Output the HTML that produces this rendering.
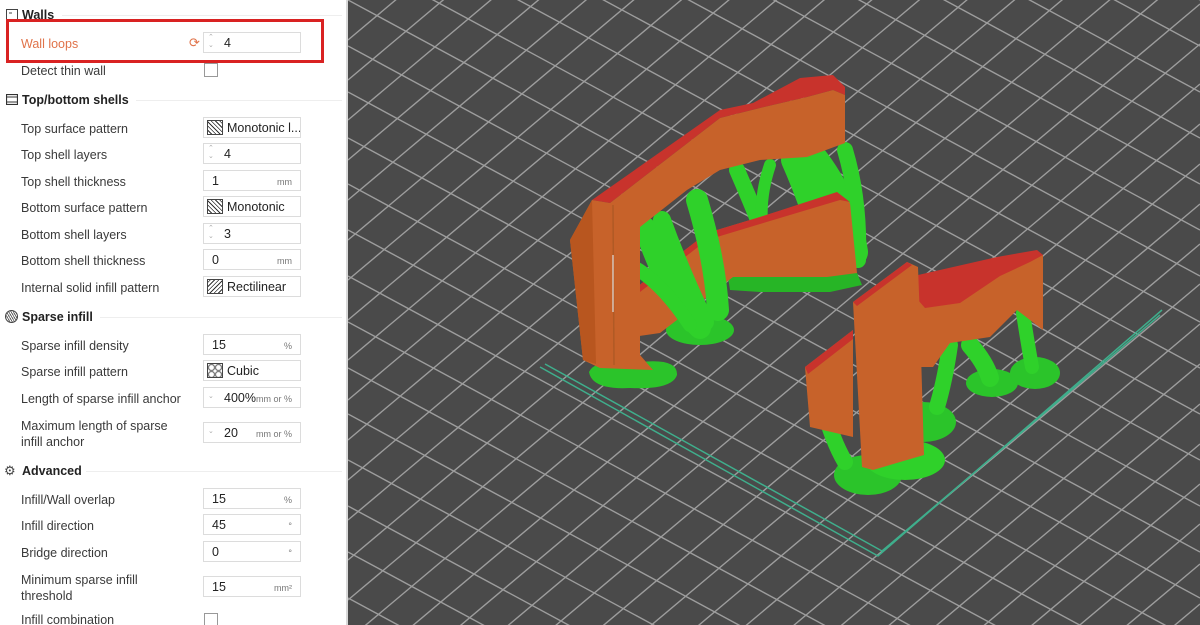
<!DOCTYPE html>
<html><head><meta charset="utf-8"><style>
body{margin:0;width:1200px;height:625px;overflow:hidden;position:relative;font-family:"Liberation Sans",sans-serif;background:#fff}
#panel{position:absolute;left:0;top:0;width:346px;height:625px;background:#fff;border-right:2px solid #d8d8d8;overflow:hidden}
.l{position:absolute;left:21px;font-size:12.5px;color:#3a3a3a;line-height:16px}
.h{position:absolute;left:22px;font-size:12.5px;font-weight:bold;color:#222}
.hl{position:absolute;height:1px;background:#eee;right:4px}
.in{position:absolute;left:203px;width:98px;height:21px;border:1px solid #dcdcdc;background:#fff;font-size:12.5px;color:#222;box-sizing:border-box;overflow:hidden}
.in .v{position:absolute;left:8px;top:3px;white-space:nowrap}
.in .u{position:absolute;right:8px;top:6px;font-size:9px;color:#777}
.sp{position:absolute;left:4px;top:1px;font-size:7px;color:#aaa;line-height:8px}
.pat{position:absolute;left:3px;top:2px;width:16px;height:15px;border:1px solid #444;box-sizing:border-box}
.cb{position:absolute;left:204px;width:12px;height:12px;border:1px solid #999}
</style></head><body>
<svg style="position:absolute;left:348px;top:0" width="852" height="625">
<rect width="852" height="625" fill="#4a4a4a"/>
<g stroke="#9d9d9d" stroke-width="1.4" fill="none">
<path d="M0,-460L852,0M0,-414L852,46M0,-368L852,92M0,-322L852,138M0,-276L852,184M0,-230L852,230M0,-184L852,276M0,-138L852,322M0,-92L852,368M0,-46L852,414M0,0L852,460M0,46L852,506M0,92L852,552M0,138L852,598M0,184L852,644M0,230L852,690M0,276L852,736M0,322L852,782M0,368L852,828M0,414L852,874M0,460L852,920M0,506L852,966M0,552L852,1012M0,598L852,1058"/>
<path d="M0,0L852,-716M0,40L852,-676M0,80L852,-636M0,120L852,-596M0,160L852,-556M0,200L852,-516M0,240L852,-476M0,280L852,-436M0,320L852,-396M0,360L852,-356M0,400L852,-316M0,440L852,-276M0,480L852,-236M0,520L852,-196M0,560L852,-156M0,600L852,-116M0,640L852,-76M0,680L852,-36M0,720L852,4M0,760L852,44M0,800L852,84M0,840L852,124M0,880L852,164M0,920L852,204M0,960L852,244M0,1000L852,284M0,1040L852,324M0,1080L852,364M0,1120L852,404M0,1160L852,444M0,1200L852,484M0,1240L852,524M0,1280L852,564M0,1320L852,604"/>
</g>
<g transform="translate(-348,0)">
<g fill="none" stroke="#3fae8c" stroke-width="1.5">
<polyline points="540,367 878,556 1162,310"/>
<polyline points="545,364 882,551 1160,315"/>
</g>
<path d="M589,372 Q595,358 640,362 Q678,358 677,375 Q672,390 630,388 Q592,390 589,372 Z" fill="#2bc42a"/>
<ellipse cx="700" cy="330" rx="34" ry="15" fill="#2bc42a"/>
<path d="M728,277 L800,275 L855,268 L862,285 L830,292 L760,292 L730,290 Z" fill="#27b526"/>
<g stroke="#2fd12a" stroke-linecap="round" fill="none">
<path d="M737,170 Q750,200 760,225" stroke-width="16"/>
<path d="M770,165 Q760,195 762,222" stroke-width="12"/>
<path d="M793,160 Q815,210 827,258" stroke-width="24"/>
<path d="M812,158 Q845,200 853,252" stroke-width="30"/>
<path d="M845,150 Q860,200 858,260" stroke-width="16"/>
</g>
<path d="M620,300 L707,233 L760,217 L837,193 L850,203 L857,273 L827,277 L733,277 L660,333 L626,338 Z" fill="#c7622a"/>
<path d="M620,300 L707,233 L760,217 L837,192 L850,202 L840,200 L760,224 L707,240 L622,306 Z" fill="#c8332c"/>
<g stroke="#2fd12a" stroke-linecap="round" fill="none">
<path d="M645,228 Q670,300 700,328" stroke-width="22"/>
<path d="M662,220 Q680,270 705,322" stroke-width="18"/>
<path d="M697,200 Q715,260 718,310" stroke-width="22"/>
<path d="M630,265 Q660,280 690,325" stroke-width="14"/>
</g>
<path d="M592,200 L720,110 L753,103 L800,78 L833,75 L845,87 L845,95 L833,90 L807,97 L760,108 L720,118 L610,203 Z" fill="#c8332c"/>
<path d="M610,203 L720,118 L760,108 L807,97 L833,90 L845,95 L845,143 L807,157 L760,160 L720,170 L687,190 L640,227 L640,355 L653,370 L600,368 L583,360 L570,240 L592,200 Z" fill="#c7622a"/>
<path d="M570,240 L592,200 L596,364 L583,360 Z" fill="#b8561f"/>
<path d="M613,205 L614,365" stroke="#b05a25" stroke-width="1.5"/>
<path d="M613,255 L613,312" stroke="#ddd" stroke-width="1.2"/>
<ellipse cx="868" cy="475" rx="34" ry="20" fill="#2bc42a"/>
<ellipse cx="923" cy="422" rx="33" ry="20" fill="#2bc42a"/>
<ellipse cx="905" cy="460" rx="40" ry="20" fill="#2fd12a"/>
<ellipse cx="992" cy="383" rx="26" ry="14" fill="#2bc42a"/>
<ellipse cx="1035" cy="373" rx="25" ry="16" fill="#2bc42a"/>
<g stroke="#2fd12a" stroke-linecap="round" fill="none">
<path d="M1023,313 Q1028,345 1032,367" stroke-width="14"/>
<path d="M970,345 Q985,362 990,378" stroke-width="18"/>
<path d="M950,345 Q945,380 937,407" stroke-width="16"/>
<path d="M823,405 Q832,440 845,462" stroke-width="16"/>
</g>
<path d="M918,280 L997,259 L1037,252 L1043,255 L1043,330 L1017,310 L990,337 L950,343 L933,367 L918,367 Z" fill="#c7622a"/>
<path d="M918,275 L997,257 L1037,250 L1043,255 L1030,262 L1000,276 L960,303 L925,308 L918,300 Z" fill="#c8332c"/>
<path d="M805,367 L853,330 L853,437 L810,427 Z" fill="#c7622a"/>
<path d="M805,367 L853,330 L853,339 L808,374 Z" fill="#c8332c"/>
<path d="M853,302 L907,262 L918,267 L920,320 L924,455 L873,470 L862,467 Z" fill="#c7622a"/>
<path d="M853,302 L907,262 L912,265 L857,306 Z" fill="#c8332c"/>
</g>
</svg>
<div id="panel">
<svg style="position:absolute;left:6px;top:9px" width="12" height="11"><rect x="0.5" y="0.5" width="11" height="10" fill="none" stroke="#444"/><line x1="3" y1="4" x2="6" y2="4" stroke="#444"/></svg>
<div class="h" style="top:8px">Walls</div><div class="hl" style="left:62px;top:15px"></div>
<div class="l" style="top:36px;color:#e0734a">Wall loops</div>
<div style="position:absolute;left:189px;top:35px;font-size:13px;color:#e0734a">⟳</div>
<div class="in" style="top:32px"><div class="sp">⌃<br>⌄</div><div class="v" style="left:20px">4</div></div>
<div style="position:absolute;left:6px;top:19px;width:312px;height:38px;border:3px solid #d92222"></div>
<div class="l" style="top:63px">Detect thin wall</div><div class="cb" style="top:63px"></div>
<svg style="position:absolute;left:6px;top:94px" width="12" height="11"><rect x="0.5" y="0.5" width="11" height="10" fill="none" stroke="#333" stroke-width="1.2"/><line x1="0" y1="3" x2="12" y2="3" stroke="#333"/><line x1="0" y1="8" x2="12" y2="8" stroke="#333"/></svg>
<div class="h" style="top:93px">Top/bottom shells</div><div class="hl" style="left:136px;top:100px"></div>
<div class="l" style="top:121px">Top surface pattern</div><div class="in" style="top:117px"><div class="pat" style="background:repeating-linear-gradient(45deg,#fff 0 2px,#333 2px 3px)"></div><div class="v" style="left:23px">Monotonic l...</div></div>
<div class="l" style="top:147px">Top shell layers</div><div class="in" style="top:143px"><div class="sp">⌃<br>⌄</div><div class="v" style="left:20px">4</div></div>
<div class="l" style="top:174px">Top shell thickness</div><div class="in" style="top:170px"><div class="v">1</div><div class="u">mm</div></div>
<div class="l" style="top:200px">Bottom surface pattern</div><div class="in" style="top:196px"><div class="pat" style="background:repeating-linear-gradient(45deg,#fff 0 2px,#333 2px 3px)"></div><div class="v" style="left:23px">Monotonic</div></div>
<div class="l" style="top:227px">Bottom shell layers</div><div class="in" style="top:223px"><div class="sp">⌃<br>⌄</div><div class="v" style="left:20px">3</div></div>
<div class="l" style="top:253px">Bottom shell thickness</div><div class="in" style="top:249px"><div class="v">0</div><div class="u">mm</div></div>
<div class="l" style="top:280px">Internal solid infill pattern</div><div class="in" style="top:276px"><div class="pat" style="background:repeating-linear-gradient(-45deg,#fff 0 2px,#333 2px 3px)"></div><div class="v" style="left:23px">Rectilinear</div></div>
<div style="position:absolute;left:5px;top:310px;width:11px;height:11px;border-radius:50%;border:1px solid #444;background:repeating-linear-gradient(60deg,#fff 0 1px,#666 1px 2px)"></div>
<div class="h" style="top:310px">Sparse infill</div><div class="hl" style="left:100px;top:317px"></div>
<div class="l" style="top:338px">Sparse infill density</div><div class="in" style="top:334px"><div class="v">15</div><div class="u">%</div></div>
<div class="l" style="top:364px">Sparse infill pattern</div><div class="in" style="top:360px"><div class="pat" style="background:radial-gradient(circle,#fff 2px,#555 3px,#fff 4px);background-size:7px 7px"></div><div class="v" style="left:23px">Cubic</div></div>
<div class="l" style="top:391px">Length of sparse infill anchor</div><div class="in" style="top:387px"><div class="sp" style="top:5px">⌄</div><div class="v" style="left:20px">400%<span style="font-size:9px;color:#777">mm or %</span></div></div>
<div class="l" style="top:418px">Maximum length of sparse<br>infill anchor</div><div class="in" style="top:422px"><div class="sp" style="top:5px">⌄</div><div class="v" style="left:20px">20</div><div class="u">mm or %</div></div>
<div style="position:absolute;left:4px;top:463px;font-size:13px;color:#444">⚙</div>
<div class="h" style="top:464px">Advanced</div><div class="hl" style="left:86px;top:471px"></div>
<div class="l" style="top:492px">Infill/Wall overlap</div><div class="in" style="top:488px"><div class="v">15</div><div class="u">%</div></div>
<div class="l" style="top:518px">Infill direction</div><div class="in" style="top:514px"><div class="v">45</div><div class="u">°</div></div>
<div class="l" style="top:545px">Bridge direction</div><div class="in" style="top:541px"><div class="v">0</div><div class="u">°</div></div>
<div class="l" style="top:572px">Minimum sparse infill<br>threshold</div><div class="in" style="top:576px"><div class="v">15</div><div class="u">mm²</div></div>
<div class="l" style="top:612px">Infill combination</div><div class="cb" style="top:613px"></div>
</div>
</body></html>
